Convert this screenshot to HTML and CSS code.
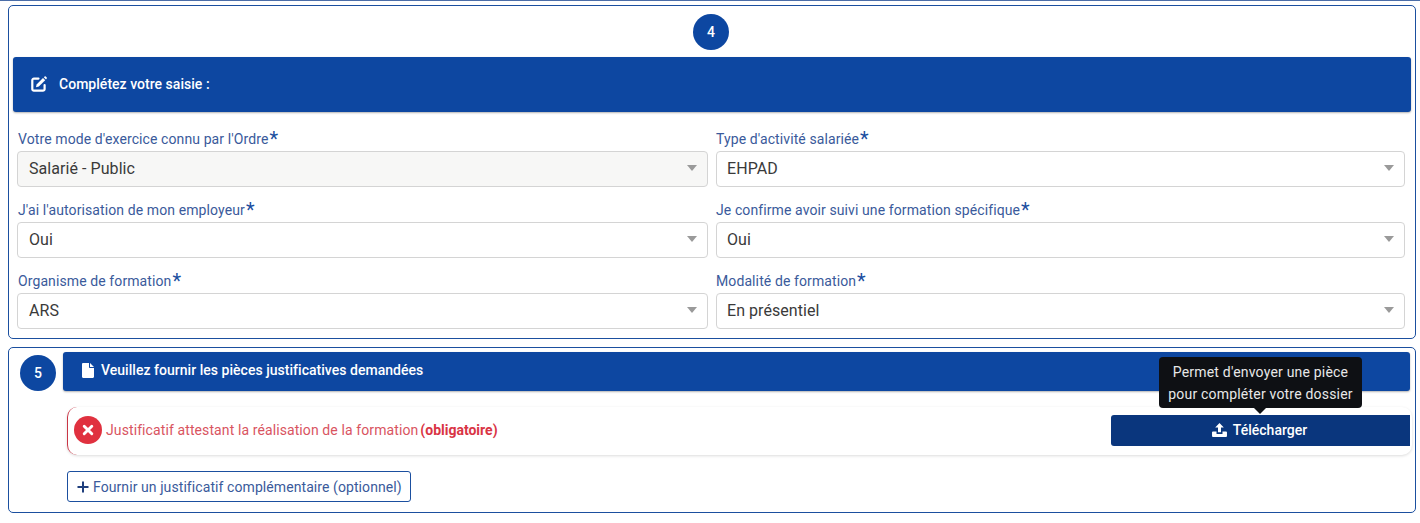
FILE: index.html
```html
<!DOCTYPE html>
<html lang="fr">
<head>
<meta charset="utf-8">
<title>Saisie</title>
<link rel="stylesheet" href="styles.css">
</head>
<body>
<div class="prev-edge"></div>
<section class="card card-form">
  <div class="step step-center">4</div>
  <header class="banner banner-big">
    <svg class="ico-edit" viewBox="0 0 16 16" width="16" height="16"><path d="M7.500 2.600H3.200A1.700 1.700 0 0 0 1.300 4.300v8.500a1.700 1.700 0 0 0 1.900 1.900h8.500a1.700 1.700 0 0 0 1.900-1.900V9" fill="none" stroke="#fff" stroke-width="2.200" stroke-linecap="round"/><path d="M5.600 8.400 12 2l2.200 2.200-6.400 6.400-2.800.6z" fill="#fff"/><path d="M12.800 1.200 13.600.5a.9.9 0 0 1 1.200 0l.9.9a.9.9 0 0 1 0 1.200l-.7.8z" fill="#fff"/></svg>
    <span>Complétez votre saisie :</span>
  </header>
  <div class="fields">
    <div class="field"><label class="lbl">Votre mode d'exercice connu par l'Ordre<b class="star">*</b></label><div class="select select-off">Salarié - Public<i class="caret"></i></div></div>
    <div class="field"><label class="lbl">Type d'activité salariée<b class="star">*</b></label><div class="select">EHPAD<i class="caret"></i></div></div>
    <div class="field"><label class="lbl">J'ai l'autorisation de mon employeur<b class="star">*</b></label><div class="select">Oui<i class="caret"></i></div></div>
    <div class="field"><label class="lbl">Je confirme avoir suivi une formation spécifique<b class="star">*</b></label><div class="select">Oui<i class="caret"></i></div></div>
    <div class="field"><label class="lbl">Organisme de formation<b class="star">*</b></label><div class="select">ARS<i class="caret"></i></div></div>
    <div class="field"><label class="lbl">Modalité de formation<b class="star">*</b></label><div class="select">En présentiel<i class="caret"></i></div></div>
  </div>
</section>
<section class="card card-docs">
  <div class="docs-head">
    <div class="step">5</div>
    <header class="banner banner-small">
      <svg class="ico-file" viewBox="0 0 12 15" width="12" height="15"><path d="M1.200 0H7v4.200c0 .5.300.8.800.8H12v8.800c0 .7-.5 1.200-1.200 1.200H1.200C.5 15 0 14.500 0 13.800V1.200C0 .5.500 0 1.200 0zM8 0l4 4H8z" fill="#fff"/></svg>
      <span>Veuillez fournir les pièces justificatives demandées</span>
    </header>
  </div>
  <div class="docs-body">
    <div class="doc-row">
      <span class="err-ico"><svg viewBox="0 0 12 12" width="12" height="12"><path d="M2.200 2.200 9.800 9.800M9.800 2.200 2.200 9.800" stroke="#fff" stroke-width="2.900" stroke-linecap="round"/></svg></span>
      <span class="doc-text">Justificatif attestant la réalisation de la formation</span>
      <strong class="doc-req">(obligatoire)</strong>
      <div class="upload-wrap">
        <button class="upload" type="button">
          <svg viewBox="0 0 16 15" width="15" height="14"><path d="M8 0 12.600 4.800H9.600V10H6.400V4.800H3.400z" fill="#fff"/><path d="M1 9h3.800v2.800h6.400V9H15c.6 0 1 .4 1 1v4c0 .6-.4 1-1 1H1c-.6 0-1-.4-1-1v-4c0-.6.400-1 1-1z" fill="#fff"/></svg>
          <span>Télécharger</span>
        </button>
        <div class="tip">Permet d'envoyer une pièce<br>pour compléter votre dossier</div>
      </div>
    </div>
    <button class="add" type="button"><svg viewBox="0 0 12 12" width="12" height="12"><path d="M6 .5v11M.5 6h11" stroke="#1f3f7d" stroke-width="2"/></svg><span>Fournir un justificatif complémentaire (optionnel)</span></button>
  </div>
</section>
</body>
</html>
```
FILE: styles.css
```css
* { box-sizing: border-box; }
html, body { margin: 0; padding: 0; background: #fff; }
body { font-family: Roboto, "Liberation Sans", sans-serif; font-size: 14px; height: 523px; overflow: hidden; }
.prev-edge { height: 1px; background: #4a6da8; }
.card { margin: 4px 4px 0 8px; width: 1408px; border: 1px solid #1b4f9f; border-radius: 5px; background: #fff; }
.card-form { height: 334px; padding: 8px 4px 0; }
.card-docs { margin-top: 8px; height: 166px; padding: 4px 5px 0 11px; }
.step { width: 36px; height: 36px; border-radius: 50%; background: #0d47a1; color: #fff; font-weight: 500; font-size: 14px; display: flex; align-items: center; justify-content: center; flex: none; }
.step-center { margin: 0 auto 7px; transform: translateX(-1px); }
.banner { background: #0d47a1; color: #fff; font-weight: 500; border-radius: 3px; display: flex; align-items: center; box-shadow: 0 1px 2px rgba(0,0,0,.3); }
.banner-big { height: 55px; padding: 0 0 2px 18px; gap: 12px; font-size: 14px; letter-spacing: .03px; }
.banner-small { height: 39px; flex: 1; padding: 0 0 3px 19px; gap: 7px; font-size: 14px; letter-spacing: .03px; }
.fields { display: grid; grid-template-columns: 691px 689px; column-gap: 8px; margin: 15px 0 0 4px; row-gap: 11px; }
.field { display: flex; flex-direction: column; }
.lbl { color: #3a5a9b; font-size: 14px; line-height: 20px; height: 24px; padding-left: 1px; padding-top: 2px; white-space: nowrap; letter-spacing: .1px; }
.field:nth-child(even) .lbl { padding-left: 0; }
.star { font-weight: 400; font-size: 20px; line-height: 14px; color: #1b4f9f; margin-left: 1px; position: relative; top: 2px; letter-spacing: 0; }
.select { height: 36px; border: 1px solid #d4d4d4; border-radius: 4px; background: #fff; color: #3a3a3a; font-size: 16px; line-height: 33px; padding-left: 11px; position: relative; letter-spacing: .06px; }
.field:nth-child(even) .select { padding-left: 10px; }
.select-off { background: #f7f7f6; }
.caret { position: absolute; right: 10px; top: 13px; width: 0; height: 0; border-left: 5px solid transparent; border-right: 5px solid transparent; border-top: 6px solid #9a9a9a; }
.docs-head { display: flex; gap: 7px; align-items: flex-start; }
.docs-head .step { margin-top: 3px; }
.docs-body { padding-left: 47px; }
.doc-row { display: flex; align-items: center; height: 48px; margin: 16px 0 0 0; width: 1345px; border-left: 1.500px solid #c93545; border-radius: 10px; box-shadow: 0 1px 3px rgba(0,0,0,.14); padding: 0 0 3px 6px; position: relative; }
.err-ico { width: 28px; height: 28px; border-radius: 50%; background: #e0313f; display: flex; align-items: center; justify-content: center; flex: none; margin-right: 4px; }
.doc-text { color: #d9545f; font-size: 14px; letter-spacing: .1px; }
.doc-req { color: #d93444; font-size: 14px; font-weight: 700; margin-left: 2px; }
.upload-wrap { position: absolute; left: 1043px; top: 8px; width: 299px; height: 31px; }
.upload { width: 100%; height: 100%; border: 0; border-radius: 3px 0 0 3px; background: #0a367d; color: #fff; font: 500 14px Roboto, "Liberation Sans", sans-serif; display: flex; align-items: center; justify-content: center; gap: 6px; padding: 0 2px 2px 0; }
.tip { position: absolute; left: 48px; bottom: 38px; width: 203px; height: 51px; background: #0e1014; color: #e8e8e8; border-radius: 4px; font-size: 14px; line-height: 21.500px; text-align: center; padding-top: 5px; white-space: nowrap; letter-spacing: .2px; }
.tip::after { content: ""; position: absolute; left: 95px; top: 100%; border-left: 6px solid transparent; border-right: 6px solid transparent; border-top: 6px solid #0e1014; }
.add { margin-top: 16px; width: 344px; height: 31px; border: 1px solid #1b4f9f; border-radius: 3px; background: #fff; color: #3a5a9b; font: 400 14px Roboto, "Liberation Sans", sans-serif; letter-spacing: .08px; display: flex; align-items: center; gap: 4px; padding: 0 0 0 9px; white-space: nowrap; }
```
